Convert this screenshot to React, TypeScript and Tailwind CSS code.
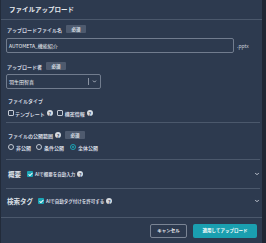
import { ChevronDown, Check } from 'lucide-react';

const font = { fontFamily: '"Noto Sans CJK JP", "Noto Sans", sans-serif' };

function Badge() {
  return (
    <span className="ml-[4px] inline-flex h-[8px] w-[20px] items-center justify-center rounded-[1px] bg-[#4e5a6e] text-[4.5px] font-bold leading-none text-[#dfe3ea]">
      必須
    </span>
  );
}

function Help() {
  return (
    <span className="ml-[2px] inline-flex h-[6px] w-[6px] items-center justify-center rounded-full bg-[#d6dbe2] text-[5px] font-bold leading-none text-[#2d3a4f]">
      ?
    </span>
  );
}

function Box({ checked }: { checked?: boolean }) {
  if (checked) {
    return (
      <span className="inline-flex h-[6px] w-[6px] items-center justify-center rounded-[1px] bg-[#1ba5b5]">
        <Check size={5} strokeWidth={5} color="#ffffff" />
      </span>
    );
  }
  return <span className="inline-block h-[6px] w-[6px] rounded-[1px] border border-[#c3c9d3]" />;
}

function Radio({ checked }: { checked?: boolean }) {
  if (checked) {
    return (
      <span className="inline-flex h-[6px] w-[6px] items-center justify-center rounded-full border border-[#1ba5b5]">
        <span className="h-[2px] w-[2px] rounded-full bg-[#1ba5b5]" />
      </span>
    );
  }
  return <span className="inline-block h-[6px] w-[6px] rounded-full border border-[#c3c9d3]" />;
}

export default function App() {
  return (
    <div className="flex h-[243px] w-[266px] bg-[#2d3a4f] text-[#d3d8e0]" style={font}>
      <div className="flex w-[262px] flex-col border-l border-[#222b3a]">
        <div className="flex h-[20px] items-center border-b border-[#4b586c] pl-[8px] text-[6.5px] font-bold text-[#e6e9ee]">
          ファイルアップロード
        </div>

        <div className="flex flex-1 flex-col pl-[5px] pr-[3px]">
          <div className="mt-[5px] flex h-[8px] items-center text-[5px] font-bold leading-none">
            <span className="ml-[1px]">アップロードファイル名</span>
            <Badge />
          </div>
          <div className="mt-[5px] flex items-center">
            <div className="flex h-[15px] w-[228px] items-center rounded-[2px] border border-[#717c8e] px-[2px] text-[5px] leading-none text-[#eef0f3]">
              AUTOMETA_機能紹介
            </div>
            <span className="ml-[3px] text-[5px] leading-none text-[#c8ced7]">.pptx</span>
          </div>

          <div className="mt-[9px] flex h-[8px] items-center text-[5px] font-bold leading-none">
            <span className="ml-[1px]">アップロード者</span>
            <Badge />
          </div>
          <div className="mt-[4px] flex h-[15px] w-[95px] items-center rounded-[2px] border border-[#717c8e] pl-[2px] text-[5px] leading-none text-[#eef0f3]">
            <span className="flex-1">羽生田智喜</span>
            <span className="h-[7px] w-px bg-[#8a93a2]" />
            <span className="flex w-[11px] justify-center">
              <ChevronDown size={5} strokeWidth={4} color="#c3c9d3" />
            </span>
          </div>

          <div className="mt-[7px] flex h-[8px] items-center pl-[2px] text-[5px] font-bold leading-none">
            ファイルタイプ
          </div>
          <div className="mt-[6px] flex h-[6px] items-center pl-[2px] text-[5px] font-bold leading-none">
            <Box />
            <span className="ml-[1px]">テンプレート</span>
            <Help />
            <span className="ml-[4px]" />
            <Box />
            <span className="ml-[2px]">機密情報</span>
            <Help />
          </div>

          <div className="mt-[6px] h-px w-[254px] bg-[#4b586c]" />

          <div className="mt-[8px] flex h-[8px] items-center pl-[2px] text-[5px] font-bold leading-none">
            <span>ファイルの公開範囲</span>
            <Help />
            <Badge />
          </div>
          <div className="mt-[5px] flex h-[6px] items-center pl-[2px] text-[5px] font-bold leading-none">
            <Radio />
            <span className="ml-[2px]">非公開</span>
            <span className="ml-[5px]" />
            <Radio />
            <span className="ml-[2px]">条件公開</span>
            <span className="ml-[6px]" />
            <Radio checked />
            <span className="ml-[2px]">全体公開</span>
          </div>

          <div className="mt-[9px] h-px w-[254px] bg-[#4b586c]" />

          <div className="flex h-[28px] w-[254px] items-center pl-[2px]">
            <span className="text-[6.5px] font-bold leading-none text-[#dde1e8]">概要</span>
            <span className="ml-[6px]" />
            <Box checked />
            <span className="ml-[2px] text-[4.5px] font-bold leading-none">AIで概要を自動入力</span>
            <Help />
            <span className="flex-1" />
            <ChevronDown size={6} strokeWidth={4} color="#c3c9d3" />
          </div>

          <div className="h-px w-[254px] bg-[#4b586c]" />

          <div className="flex h-[24px] w-[254px] items-center pl-[1px]">
            <span className="text-[6.5px] font-bold leading-none text-[#dde1e8]">検索タグ</span>
            <span className="ml-[5px]" />
            <Box checked />
            <span className="ml-[2px] text-[4.5px] font-bold leading-none">AIで自動タグ付けを許可する</span>
            <Help />
            <span className="flex-1" />
            <ChevronDown size={6} strokeWidth={4} color="#c3c9d3" />
          </div>
        </div>

        <div className="flex h-[26px] items-center justify-end gap-[6px] border-t border-[#4b586c] pr-[5px]">
          <button className="flex h-[14px] w-[37px] items-center justify-center rounded-[2px] border border-[#7a8494] text-[4.5px] font-bold leading-none text-[#e6e9ee]">
            キャンセル
          </button>
          <button className="flex h-[14px] w-[64px] items-center justify-center rounded-[2px] bg-[#1a9fb0] text-[4.5px] font-bold leading-none text-white">
            適用してアップロード
          </button>
        </div>
      </div>
      <div className="w-[4px] bg-[#1f2634]" />
    </div>
  );
}
